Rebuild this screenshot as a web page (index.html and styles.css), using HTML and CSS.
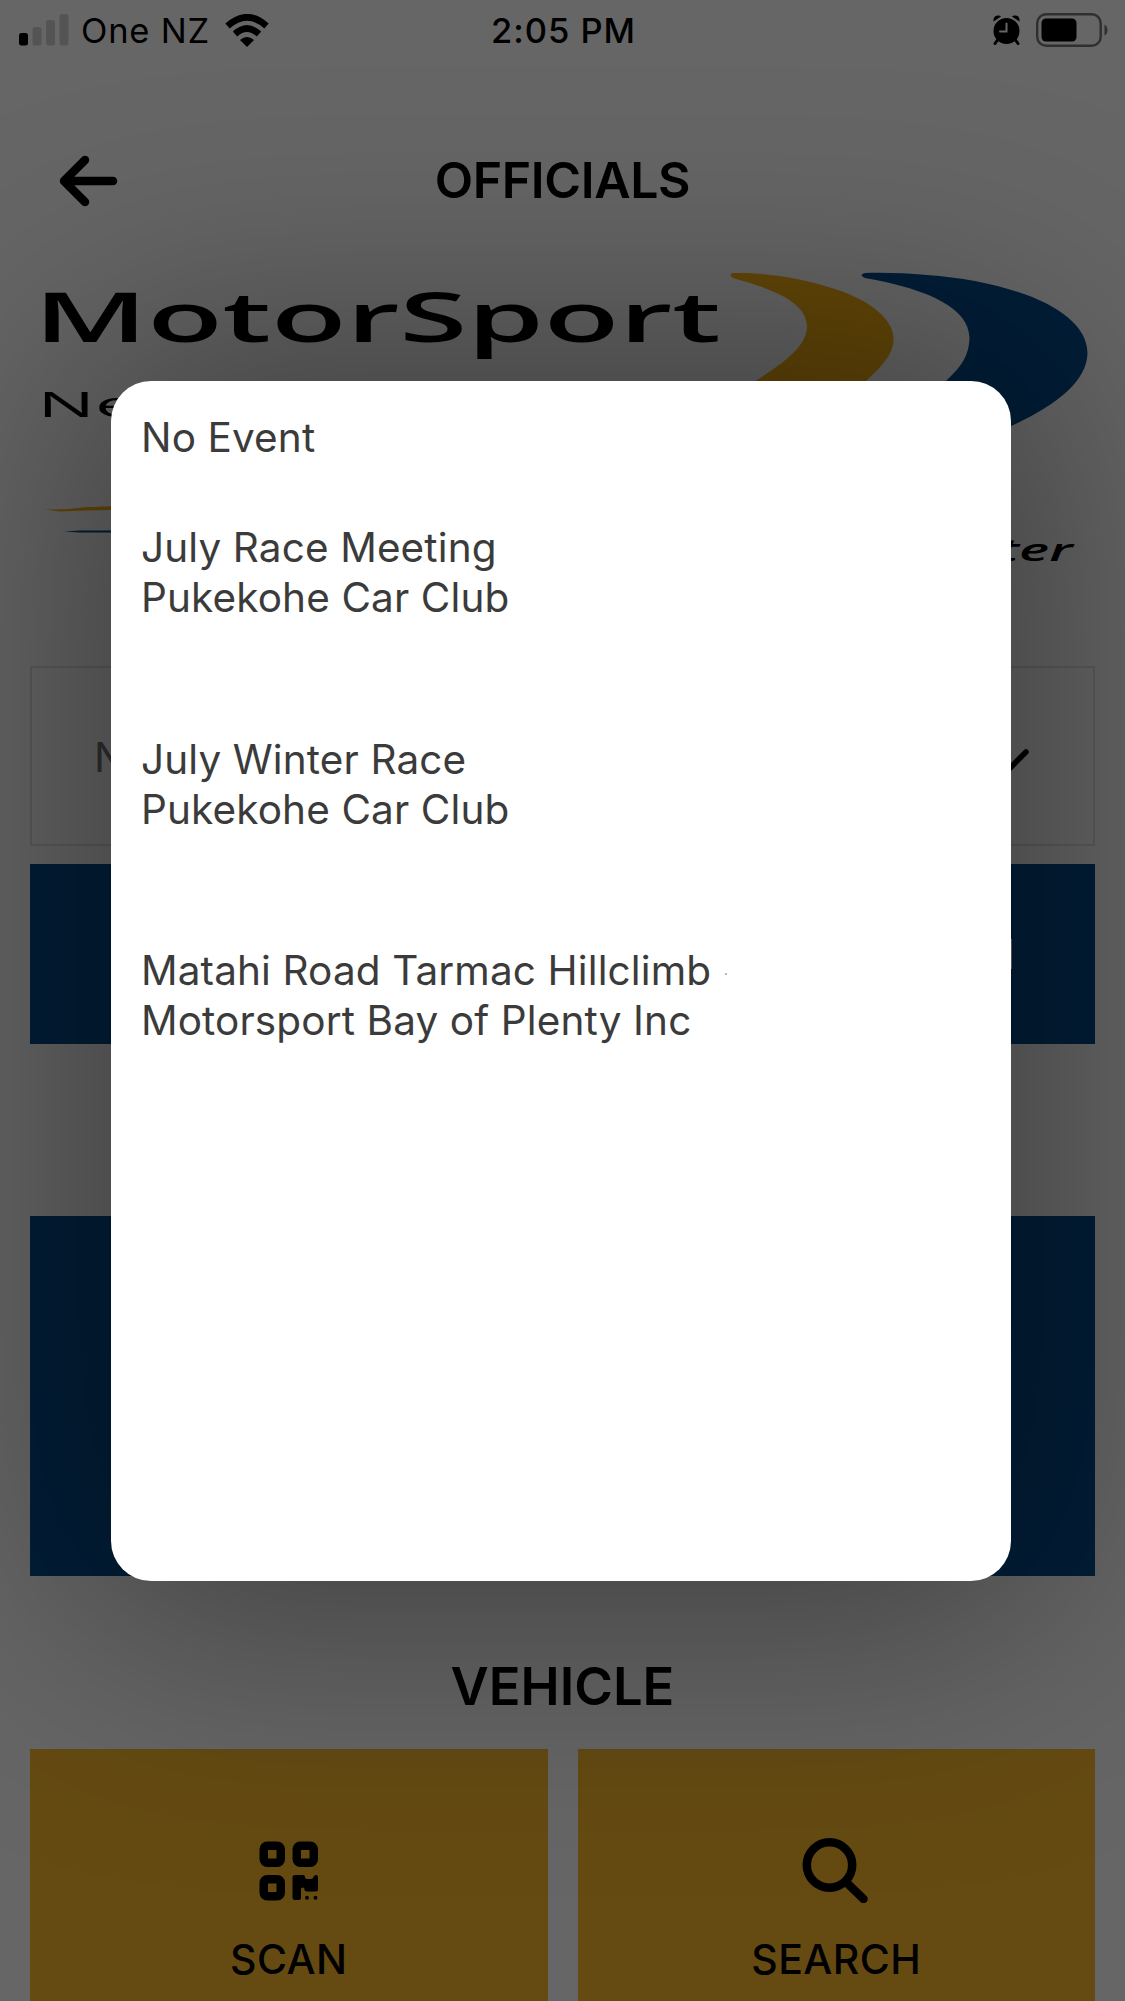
FILE: index.html
```html
<!DOCTYPE html>
<html lang="en">
<head>
    <meta charset="UTF-8">
    <meta name="viewport" content="width=device-width, initial-scale=1.0">
    <title>Officials</title>
    <link rel="stylesheet" href="styles.css">
</head>
<body>

    <div class="screen">
        <div class="status-bar">
            <div class="status-left">
                <svg class="signal" width="50" height="32" viewBox="0 0 50 32">
                    <rect x="0" y="19" width="9" height="12.5" rx="2.5"/>
                    <rect class="off" x="13.5" y="13" width="9" height="18.5" rx="2.5"/>
                    <rect class="off" x="27" y="6" width="9" height="25.5" rx="2.5"/>
                    <rect class="off" x="40.5" y="0" width="9" height="31.5" rx="2.5"/>
                </svg>
                <span class="carrier">One NZ</span>
                <svg class="wifi" width="44" height="33" viewBox="0 0 44 33">
                    <path class="arc" d="M2.5 12 Q22 -5.5 41.5 12"/>
                    <path class="arc" d="M10 20 Q22 9 34 20"/>
                    <path d="M15 26 Q22 20 29 26 L22 33 Z"/>
                </svg>
            </div>
            <span class="time">2:05 PM</span>
            <div class="status-right">
                <svg width="29" height="30" viewBox="0 0 29 30">
                    <circle cx="14.5" cy="16" r="13"/>
                    <path d="M1.5 6.5 Q1 1 5.5 0.5 Q8 0 9 1.5 Z M27.5 6.5 Q28 1 23.5 0.5 Q21 0 20 1.5 Z"/>
                    <path class="leg" d="M5.5 25 L3 28.5 M23.5 25 L26 28.5"/>
                    <path class="hands" d="M14.5 8.5 V16.5 H8"/>
                </svg>
                <svg width="72" height="34" viewBox="0 0 72 34">
                    <rect class="battery-case" x="1.2" y="1.2" width="63.5" height="31.6" rx="9"/>
                    <rect x="5.5" y="5.5" width="35" height="23" rx="4.5"/>
                    <path class="battery-tip" d="M68.5 11.5 Q71.5 13 71.5 17 Q71.5 21 68.5 22.5 Z"/>
                </svg>
            </div>
        </div>

        <header class="header">
            <svg class="back" width="60" height="52" viewBox="0 0 60 52">
                <path d="M54 26 H5 M26 5 L5 26 L26 47"/>
            </svg>
            <h1>OFFICIALS</h1>
        </header>

        <svg class="logo" width="1125" height="326" viewBox="0 260 1125 326">
            <text class="logo-name" x="34" y="341.5" textLength="687" lengthAdjust="spacingAndGlyphs">MotorSport</text>
            <text class="logo-country" transform="translate(37.5 416.5) scale(2.15 1)">Ne</text>
            <path class="logo-yellow" d="M733 273 C760 272 800 277 835 289 C872 301 893 320 893.5 338 C894 354 882 366 866 381 C850 395 820 410 790 420 L700 420 C720 403 740 392 757 380 C787 361 807 345 807 326 C806 302 775 290 733 278 Q728 275 733 273 Z"/>
            <path class="logo-blue" d="M865 273 C900 272 940 275 975 281 C1042 294 1087 319 1087.5 353 C1087 382 1055 406 1011 426 L900 440 C910 415 930 395 947 380 C962 366 969 355 969.5 338 C969 309 932 290 865 278 Q858 275 865 273 Z"/>
            <path class="logo-line-yellow" d="M45 509.5 L66 509.2 L85 507.2 L160 504.5 V509 L85 510.5 L60 511.5 Z"/>
            <path class="logo-line-blue" d="M64 531.5 L80 530.5 H160 V532.5 H80 Z"/>
            <text class="logo-tag" transform="translate(998 560.8) scale(1.84 1)">ter</text>
        </svg>

        <main class="content">
            <div class="select">
                <span>N</span>
                <svg width="54" height="34" viewBox="0 0 54 34">
                    <path d="M3 5 L27 29 L51 5"/>
                </svg>
            </div>
            <div class="button">
                <span class="button-mark"></span>
            </div>
            <div class="panel"></div>
            <h2>VEHICLE</h2>
            <div class="tiles">
                <div class="tile">
                    <svg class="qr" width="60" height="60" viewBox="0 0 60 60">
                        <rect x="4.75" y="4.75" width="17" height="17" rx="3.5"/>
                        <rect x="37.75" y="4.75" width="17" height="17" rx="3.5"/>
                        <rect x="4.75" y="38.25" width="17" height="17" rx="3.5"/>
                        <path d="M33.5 36.5 Q33.5 34 36 34 H44 Q46 34 46 36 Q46 38 48 38 H52 Q54 38 54.5 36 Q55 34 57 34 Q59 34 59 36 V48 Q59 50.5 56.5 50.5 H48 Q45.5 50.5 45.5 48.5 Q45.5 46.5 43.8 46.5 Q42 46.5 42 48.5 V57 Q42 59 40 59 H36 Q33.5 59 33.5 56.5 Z"/>
                        <circle cx="48" cy="56.7" r="2"/>
                        <circle cx="56.5" cy="56.7" r="2"/>
                    </svg>
                    <p>SCAN</p>
                </div>
                <div class="tile">
                    <svg class="magnifier" width="68" height="66" viewBox="0 0 68 66">
                        <circle cx="27.5" cy="28" r="22.7"/>
                        <path d="M44 45 L61.5 62"/>
                    </svg>
                    <p>SEARCH</p>
                </div>
            </div>
        </main>

        <div class="overlay">
            <div class="modal">
                <div class="event">No Event</div>
                <div class="event">
                    <p>July Race Meeting</p>
                    <p>Pukekohe Car Club</p>
                </div>
                <div class="event">
                    <p>July Winter Race</p>
                    <p>Pukekohe Car Club</p>
                </div>
                <div class="event">
                    <p>Matahi Road Tarmac Hillclimb <span class="dot"></span></p>
                    <p>Motorsport Bay of Plenty Inc</p>
                </div>
            </div>
        </div>
    </div>

</body>
</html>
```

FILE: styles.css
```css
* {
    box-sizing: border-box;
}

body {
    margin: 0;
    font-family: Inter, 'Liberation Sans', sans-serif;
    background-color: #fff;
    color: #000;
}

h1, h2, p {
    margin: 0;
}

svg {
    display: block;
}

.screen {
    position: relative;
    width: 1125px;
    height: 2001px;
    overflow: hidden;
}

/* Status bar */
.status-bar {
    display: grid;
    grid-template-columns: 1fr auto 1fr;
    align-items: center;
    height: 62px;
    padding: 0 17px 2px 19px;
    font-size: 34.5px;
}

.status-left, .status-right {
    display: flex;
    align-items: center;
}

.status-right {
    justify-content: flex-end;
    gap: 15px;
}

.carrier {
    margin: 1px 15px 0 12px;
    letter-spacing: 0.8px;
}

.signal .off {
    fill: #d2d2d2;
}

.wifi .arc {
    fill: none;
    stroke: #000;
    stroke-width: 6.5;
}

.time {
    margin-top: 1px;
    font-weight: 500;
    letter-spacing: 1px;
}

.leg, .hands {
    fill: none;
    stroke: #000;
    stroke-width: 3;
    stroke-linecap: round;
}

.hands {
    stroke: #fff;
    stroke-width: 2;
}

.battery-case {
    fill: none;
    stroke: #777;
    stroke-width: 2.4;
}

.battery-tip {
    fill: #777;
}

/* Header */
.header {
    display: grid;
    grid-template-columns: 90px 1fr 90px;
    align-items: center;
    height: 198px;
    padding: 39px 59px 0;
}

.header h1 {
    margin-top: -2px;
    font-size: 50px;
    font-weight: 600;
    letter-spacing: -0.4px;
    text-align: center;
}

.back path {
    fill: none;
    stroke: #000;
    stroke-width: 8.5;
    stroke-linecap: round;
    stroke-linejoin: round;
}

/* Logo */
.logo text {
    font-family: 'Open Sans', 'Noto Sans', sans-serif;
}

.logo .logo-name {
    font-size: 69px;
    font-weight: 600;
}

.logo .logo-country {
    font-size: 35.5px;
    font-weight: 500;
}

.logo .logo-tag {
    font-size: 31px;
    font-weight: 600;
    font-style: italic;
}

.logo-yellow, .logo-line-yellow {
    fill: #f9b214;
}

.logo-blue, .logo-line-blue {
    fill: #064b8c;
}

/* Page content */
.content {
    padding: 80px 30px 0;
}

.select {
    display: flex;
    align-items: center;
    justify-content: space-between;
    height: 180px;
    padding: 2px 64px 0 62px;
    border: 2px solid #e4e4e4;
    color: #777;
    font-size: 41px;
}

.select svg {
    margin-top: 13px;
}

.select svg path {
    fill: none;
    stroke: #000;
    stroke-width: 5.5;
    stroke-linecap: round;
}

.button, .panel {
    height: 180px;
    margin-top: 18px;
    background-color: #064b8c;
}

.button {
    display: flex;
    align-items: center;
    justify-content: flex-end;
    padding-right: 83px;
}

.button-mark {
    width: 3px;
    height: 30px;
    background-color: #fff;
}

.panel {
    height: 360px;
    margin-top: 172px;
}

.content h2 {
    margin-top: 80px;
    font-size: 52.5px;
    font-weight: 600;
    line-height: 60px;
    text-align: center;
}

.tiles {
    display: grid;
    grid-template-columns: 1fr 1fr;
    gap: 30px;
    margin-top: 33px;
}

.tile {
    display: flex;
    flex-direction: column;
    align-items: center;
    height: 360px;
    padding-top: 88px;
    background-color: #fcbc2d;
}

.tile svg {
    height: 66px;
}

.tile .qr {
    position: relative;
    top: 1px;
}

.tile p {
    margin-top: 31px;
    font-size: 41px;
    font-weight: 500;
    line-height: 50px;
    letter-spacing: 0.4px;
}

.qr rect {
    fill: none;
    stroke: #000;
    stroke-width: 8.5;
}

.magnifier circle, .magnifier path {
    fill: none;
    stroke: #000;
    stroke-width: 8.5;
    stroke-linecap: round;
}

/* Event picker */
.overlay {
    position: absolute;
    inset: 0;
    display: flex;
    align-items: flex-start;
    justify-content: center;
    padding-top: 380.5px;
    background-color: rgba(0, 0, 0, 0.6);
}

.modal {
    width: 900px;
    height: 1200px;
    margin-right: 3px;
    padding: 32px 30px;
    border-radius: 40px;
    background-color: #fff;
    box-shadow: 0 0 250px 40px rgba(0, 0, 0, 0.38);
    color: #3b3b3b;
    font-size: 40.5px;
    line-height: 49.8px;
    letter-spacing: 0.12px;
}

.event {
    margin-bottom: 112px;
}

.event:first-child {
    margin-bottom: 61px;
}

.dot {
    display: inline-block;
    width: 2px;
    height: 2px;
    margin: 0 0 10px 2px;
    background-color: #b5b5b5;
}
```
